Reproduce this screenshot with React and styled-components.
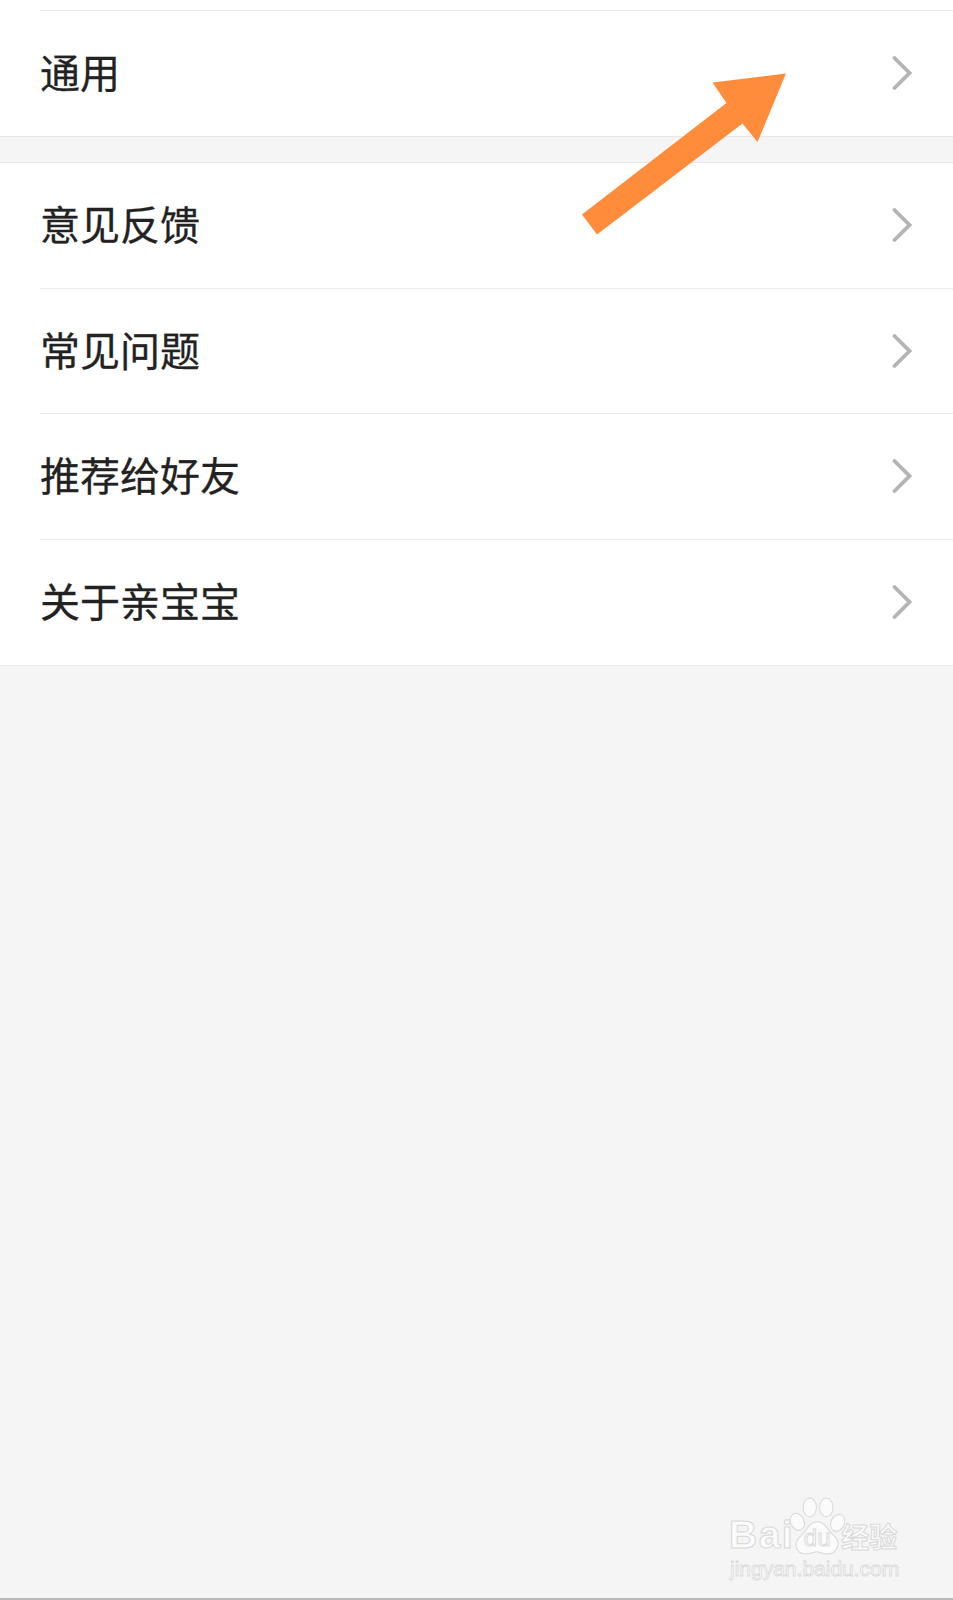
import React from "react";
import styled, { createGlobalStyle } from "styled-components";

const Global = createGlobalStyle`
  html, body { margin: 0; padding: 0; background: #f5f5f5; }
  * { box-sizing: border-box; }
`;

const Page = styled.div`
  position: relative;
  width: 953px;
  height: 1600px;
  overflow: hidden;
  background: #f5f5f5;
  border-bottom: 2px solid #b9b9b9;
  font-family: "Noto Sans CJK SC", "Liberation Sans", sans-serif;
`;

const Group = styled.section`
  background: #fff;
  padding-top: ${(p) => p.$top}px;
  margin-bottom: ${(p) => p.$gap}px;
  border-top: ${(p) => (p.$edge ? "1px solid #e7e7e7" : "none")};
  border-bottom: 1px solid #e7e7e7;
`;

const Row = styled.div`
  height: ${(p) => p.$height}px;
  margin-left: 40px;
  padding-right: 41px;
  display: flex;
  align-items: center;
  justify-content: space-between;
  border-top: ${(p) => (p.$rule ? "1px solid #ececec" : "none")};
`;

const Label = styled.span`
  font-size: 40px;
  line-height: 1;
  padding-bottom: 5px;
  color: #222;
  font-weight: 400;
  -webkit-text-stroke: 0.3px #222;
`;

const Chevron = styled.svg`
  width: 20px;
  height: 34px;
  flex: none;
  fill: none;
  stroke: #b4b4b4;
  stroke-width: 3.8;
  stroke-linecap: round;
  stroke-linejoin: miter;
  margin-bottom: 1px;
`;

const Arrow = styled.svg`
  position: absolute;
  left: 0;
  top: 0;
  width: 953px;
  height: 260px;
  pointer-events: none;
`;

const Mark = styled.div`
  position: absolute;
  left: 729px;
  top: 1497px;
  display: flex;
  flex-direction: column;
  gap: 0;
  color: #fbfbfb;
  -webkit-text-stroke: 1px #d8d8d8;
`;

const Lockup = styled.div`
  display: flex;
  align-items: flex-end;
`;

const Brand = styled.span`
  font-family: "Liberation Sans", sans-serif;
  font-weight: 700;
  font-size: 39px;
  line-height: 44px;
  letter-spacing: 1.5px;
`;

const PawBadge = styled.div`
  display: grid;
  width: 56px;
  height: 60px;
  margin-left: -5px;
  margin-right: -4px;
  > * { grid-area: 1 / 1; }
`;

const Paw = styled.svg`
  width: 56px;
  height: 60px;
  fill: #fbfbfb;
  stroke: #d8d8d8;
  stroke-width: 1;
`;

const Du = styled.span`
  align-self: end;
  justify-self: center;
  padding-bottom: 7px;
  font-family: "Liberation Sans", sans-serif;
  font-size: 24px;
  line-height: 24px;
  -webkit-text-stroke: 0.9px #d8d8d8;
`;

const Product = styled.span`
  font-size: 28px;
  line-height: 36px;
  font-weight: 700;
  margin-bottom: 3px;
`;

const Url = styled.span`
  padding-left: 1px;
  font-family: "Liberation Sans", sans-serif;
  font-size: 21px;
  line-height: 24px;
  white-space: nowrap;
  -webkit-text-stroke: 0.8px #d8d8d8;
`;

const ChevronIcon = () => (
  <Chevron viewBox="0 0 20 34">
    <path d="M2.5 2 L17.5 17 L2.5 32" />
  </Chevron>
);

const Item = ({ label, height, rule }) => (
  <Row $height={height} $rule={rule}>
    <Label>{label}</Label>
    <ChevronIcon />
  </Row>
);

export default function App() {
  return (
    <Page>
      <Global />
      <Group $top={10} $gap={25}>
        <Item label="通用" height={126} rule />
      </Group>
      <Group $top={0} $gap={0} $edge>
        <Item label="意见反馈" height={125} />
        <Item label="常见问题" height={125} rule />
        <Item label="推荐给好友" height={126} rule />
        <Item label="关于亲宝宝" height={126} rule />
      </Group>
      <Arrow viewBox="0 0 953 260">
        <polygon
          fill="#ff8c3a"
          points="786,73.5 712.5,82.5 726.5,103 582,214.5 597,234.5 742.5,123.5 757.5,142"
        />
      </Arrow>
      <Mark>
        <Lockup>
          <Brand>Bai</Brand>
          <PawBadge>
            <Paw viewBox="0 0 54 58">
              <ellipse cx="8" cy="24" rx="6.5" ry="8.5" transform="rotate(-25 8 24)" />
              <ellipse cx="20" cy="10" rx="6.5" ry="9" />
              <ellipse cx="36" cy="10" rx="6.5" ry="9" />
              <ellipse cx="47" cy="25" rx="6.5" ry="8.5" transform="rotate(25 47 25)" />
              <path d="M27 24 C35 24 37 32 43 37 C50 43 48 55 37 55 C32 55 30 53 27 53 C24 53 21 55 16 55 C6 55 4 44 11 38 C18 32 19 24 27 24 Z" />
            </Paw>
            <Du>du</Du>
          </PawBadge>
          <Product>经验</Product>
        </Lockup>
        <Url>jingyan.baidu.com</Url>
      </Mark>
    </Page>
  );
}
